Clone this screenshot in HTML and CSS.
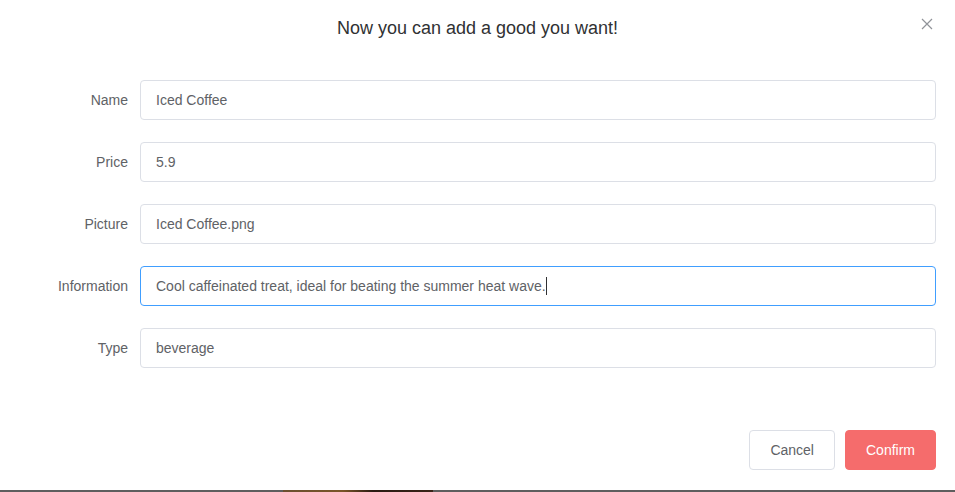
FILE: index.html
```html
<!DOCTYPE html>
<html lang="en">
<head>
<meta charset="utf-8">
<title>Add good</title>
<link rel="stylesheet" href="styles.css">
</head>
<body>
<div class="page">
  <div class="dialog">
    <div class="dialog-header">
      <span class="dialog-title">Now you can add a good you want!</span>
      <button class="close-btn" aria-label="Close">
        <svg width="16" height="16" viewBox="0 0 16 16"><path d="M3 3 L13 13 M13 3 L3 13" stroke="#909399" stroke-width="1.2" fill="none"/></svg>
      </button>
    </div>
    <div class="dialog-body">
      <form class="form">
        <div class="form-item">
          <label class="form-label">Name</label>
          <div class="input">Iced Coffee</div>
        </div>
        <div class="form-item">
          <label class="form-label">Price</label>
          <div class="input">5.9</div>
        </div>
        <div class="form-item">
          <label class="form-label">Picture</label>
          <div class="input">Iced Coffee.png</div>
        </div>
        <div class="form-item">
          <label class="form-label">Information</label>
          <div class="input focused">Cool caffeinated treat, ideal for beating the summer heat wave.<span class="caret"></span></div>
        </div>
        <div class="form-item">
          <label class="form-label">Type</label>
          <div class="input">beverage</div>
        </div>
      </form>
    </div>
    <div class="dialog-footer">
      <button class="btn btn-default">Cancel</button>
      <button class="btn btn-danger">Confirm</button>
    </div>
  </div>
  <div class="backdrop-strip">
    <div class="strip-gray left"></div>
    <div class="strip-photo"></div>
    <div class="strip-gray right"></div>
  </div>
</div>
</body>
</html>
```

FILE: styles.css
```css
* { box-sizing: border-box; }
html, body {
  margin: 0;
  padding: 0;
  background: #fff;
  overflow: hidden;
}
body {
  font-family: "Liberation Sans", Arial, sans-serif;
  width: 955px;
  height: 492px;
}
.page {
  display: flex;
  flex-direction: column;
  height: 492px;
}
.dialog {
  background: #fff;
  height: 490px;
  display: flex;
  flex-direction: column;
  position: relative;
}
.dialog-header {
  padding: 16px 20px 10px;
  text-align: center;
}
.dialog-title {
  font-size: 18px;
  line-height: 24px;
  color: #303133;
}
.close-btn {
  position: absolute;
  top: 16px;
  right: 20px;
  width: 16px;
  height: 16px;
  padding: 0;
  border: none;
  background: transparent;
  display: flex;
}
.dialog-body {
  padding: 30px 19px 30px 20px;
}
.form {
  display: flex;
  flex-direction: column;
  gap: 22px;
  margin-bottom: 22px;
}
.form-item {
  display: flex;
  align-items: center;
}
.form-label {
  width: 120px;
  flex: none;
  text-align: right;
  padding-right: 12px;
  font-size: 14px;
  color: #606266;
  line-height: 40px;
}
.input {
  flex: 1;
  height: 40px;
  line-height: 38px;
  border: 1px solid #dcdfe6;
  border-radius: 4px;
  padding: 0 15px;
  font-size: 14px;
  color: #606266;
  white-space: nowrap;
}
.input.focused {
  border-color: #409eff;
}
.caret {
  display: inline-block;
  width: 1px;
  height: 18px;
  background: #303133;
  vertical-align: middle;
  margin-top: -2px;
}
.dialog-footer {
  padding: 10px 19px 20px 20px;
  display: flex;
  justify-content: flex-end;
  gap: 10px;
}
.btn {
  height: 40px;
  padding: 0 20px;
  font-family: inherit;
  font-size: 14px;
  border-radius: 4px;
  border: 1px solid #dcdfe6;
  background: #fff;
  color: #606266;
}
.btn-danger {
  background: #f56c6c;
  border-color: #f56c6c;
  color: #fff;
}
.backdrop-strip {
  height: 2px;
  display: flex;
}
.strip-gray {
  background: #5e5e5e;
}
.strip-gray.left { width: 283px; }
.strip-gray.right { flex: 1; }
.strip-photo {
  width: 150px;
  background: linear-gradient(90deg, #6b5030 0%, #7a5528 40%, #2a1a12 60%, #3a2418 100%);
}
```
